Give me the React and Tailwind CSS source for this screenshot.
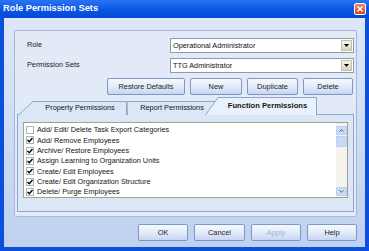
import React from 'react';

const items = [
  { label: 'Add/ Edit/ Delete Task Export Categories', checked: false },
  { label: 'Add/ Remove Employees', checked: true },
  { label: 'Archive/ Restore Employees', checked: true },
  { label: 'Assign Learning to Organization Units', checked: true },
  { label: 'Create/ Edit Employees', checked: true },
  { label: 'Create/ Edit Organization Structure', checked: true },
  { label: 'Delete/ Purge Employees', checked: true },
];

function XpButton({ children, className = '', disabled = false }) {
  return (
    <button
      className={`flex h-[17px] items-center justify-center rounded-[2px] border border-[#7d98c6] bg-linear-to-b from-[#f6f9fe] via-[#e3ebf9] to-[#c6d6f1] text-[7.4px] leading-none ${
        disabled ? 'text-[#9fb1d0]' : 'text-[#1c1c1c]'
      } ${className}`}
    >
      {children}
    </button>
  );
}

function XpSelect({ value }) {
  return (
    <div className="flex h-[15px] w-[184px] items-center border border-[#8e9aa9] bg-white pl-[2px]">
      <span className="flex-1 text-[7.3px] leading-none text-[#111]">{value}</span>
      <span className="mr-[1px] flex h-[11px] w-[11px] items-center justify-center border border-[#c4bfa9] bg-linear-to-b from-[#f7f6ef] to-[#d8d3bf]">
        <svg width="5" height="3" viewBox="0 0 5 3">
          <path d="M0 0H5L2.5 3Z" fill="#000" />
        </svg>
      </span>
    </div>
  );
}

function Checkbox({ checked }) {
  return (
    <span className="flex h-[8px] w-[8px] items-center justify-center border border-[#a8b3c4] bg-white">
      {checked && (
        <svg width="6" height="6" viewBox="0 0 6 6">
          <path d="M0.5 3L2.3 4.8L5.5 1" stroke="#000" strokeWidth="1.4" fill="none" />
        </svg>
      )}
    </span>
  );
}

function Tab({ label, width, slant, active = false }) {
  const h = active ? 18 : 14;
  return (
    <div className="relative flex shrink-0 items-center" style={{ width, height: h, paddingLeft: slant }}>
      <svg className="absolute inset-0" width={width} height={h} viewBox={`0 0 ${width} ${h}`}>
        <path
          d={`M0.5 ${h} L${slant} 0.5 H${width - 0.5} V${h}`}
          fill={active ? '#eaf1fc' : '#dbe6f7'}
          stroke="#8ea5cd"
          strokeWidth="1"
        />
      </svg>
      <span
        className={`relative flex-1 text-center leading-none text-[#151515] ${
          active ? 'text-[7.6px] font-bold' : 'text-[7.3px]'
        }`}
      >
        {label}
      </span>
    </div>
  );
}

export default function App() {
  return (
    <div className="flex h-[251px] w-[369px] flex-col bg-[#0b4fdc] font-['Liberation_Sans',Arial,sans-serif]">
      <div className="flex h-[18px] items-center justify-between bg-linear-to-b from-[#2a74f3] via-[#0a58e6] to-[#0649d2] px-[3px]">
        <span className="text-[9.3px] font-bold text-white">Role Permission Sets</span>
        <span className="flex h-[12px] w-[12px] items-center justify-center rounded-[2px] border border-white bg-linear-to-b from-[#f08a6a] to-[#d44320]">
          <svg width="6" height="6" viewBox="0 0 6 6">
            <path d="M0.5 0.5L5.5 5.5M5.5 0.5L0.5 5.5" stroke="#fff" strokeWidth="1.4" />
          </svg>
        </span>
      </div>

      <div className="mx-[4px] mb-[4px] flex flex-1 flex-col bg-linear-to-b from-[#dde7f8] to-[#bfd1f0] pl-[10px] pr-[8px] pt-[12px]">
        <div className="flex h-[187px] flex-col rounded-[2px] border border-[#a7b8d6] bg-[#e2eaf8] px-[2px] pt-[7px]">
          <div className="flex items-center justify-between pl-[10px]">
            <span className="text-[7.3px] text-[#1a1a1a]">Role</span>
            <XpSelect value="Operational Administrator" />
          </div>
          <div className="mt-[5px] flex items-center justify-between pl-[10px]">
            <span className="text-[7.3px] text-[#1a1a1a]">Permission Sets</span>
            <XpSelect value="TTG Administrator" />
          </div>
          <div className="mt-[5px] flex justify-end gap-[5px] pr-[1px]">
            <XpButton className="w-[78px]">Restore Defaults</XpButton>
            <XpButton className="w-[52px]">New</XpButton>
            <XpButton className="w-[51px]">Duplicate</XpButton>
            <XpButton className="w-[50px]">Delete</XpButton>
          </div>

          <div className="mt-[2px] flex items-end pl-[1px]">
            <Tab label="Property Permissions" width={109} slant={15} />
            <Tab label="Report Permissions" width={90} slant={0} />
            <div className="-ml-[12px]">
              <Tab label="Function Permissions" width={112} slant={13} active />
            </div>
          </div>
          <div className="-mt-px flex h-[98px] flex-col border border-[#8ea5cd] bg-[#dbe6f7] px-[5px] pt-[7px]">
            <div className="flex h-[76px] border border-[#a49f88] bg-white">
              <div className="flex flex-1 flex-col pl-[2px] pt-[2px]">
                {items.map((it) => (
                  <div key={it.label} className="flex h-[10.4px] items-center gap-[3px]">
                    <Checkbox checked={it.checked} />
                    <span className="text-[7.3px] leading-none text-[#151515]">{it.label}</span>
                  </div>
                ))}
              </div>
              <div className="flex w-[11px] flex-col bg-[#f4f3ee] pb-[1px] pt-[3px]">
                <span className="flex h-[9px] items-center justify-center rounded-[1px] border border-[#bcd0f2] bg-[#c9daf8]">
                  <svg width="5" height="3" viewBox="0 0 5 3">
                    <path d="M0.5 2.5L2.5 0.7L4.5 2.5" stroke="#4d6185" strokeWidth="1" fill="none" />
                  </svg>
                </span>
                <span className="mt-[1px] h-[11px] rounded-[1px] border border-[#bcd0f2] bg-[#c9daf8]" />
                <span className="flex-1" />
                <span className="flex h-[9px] items-center justify-center rounded-[1px] border border-[#bcd0f2] bg-[#c9daf8]">
                  <svg width="5" height="3" viewBox="0 0 5 3">
                    <path d="M0.5 0.5L2.5 2.3L4.5 0.5" stroke="#4d6185" strokeWidth="1" fill="none" />
                  </svg>
                </span>
              </div>
            </div>
          </div>
        </div>

        <div className="mt-[7px] flex justify-end gap-[6px]">
          <XpButton className="w-[50px]">OK</XpButton>
          <XpButton className="w-[51px]">Cancel</XpButton>
          <XpButton className="w-[50px]" disabled>Apply</XpButton>
          <XpButton className="w-[50px]">Help</XpButton>
        </div>
      </div>
    </div>
  );
}
